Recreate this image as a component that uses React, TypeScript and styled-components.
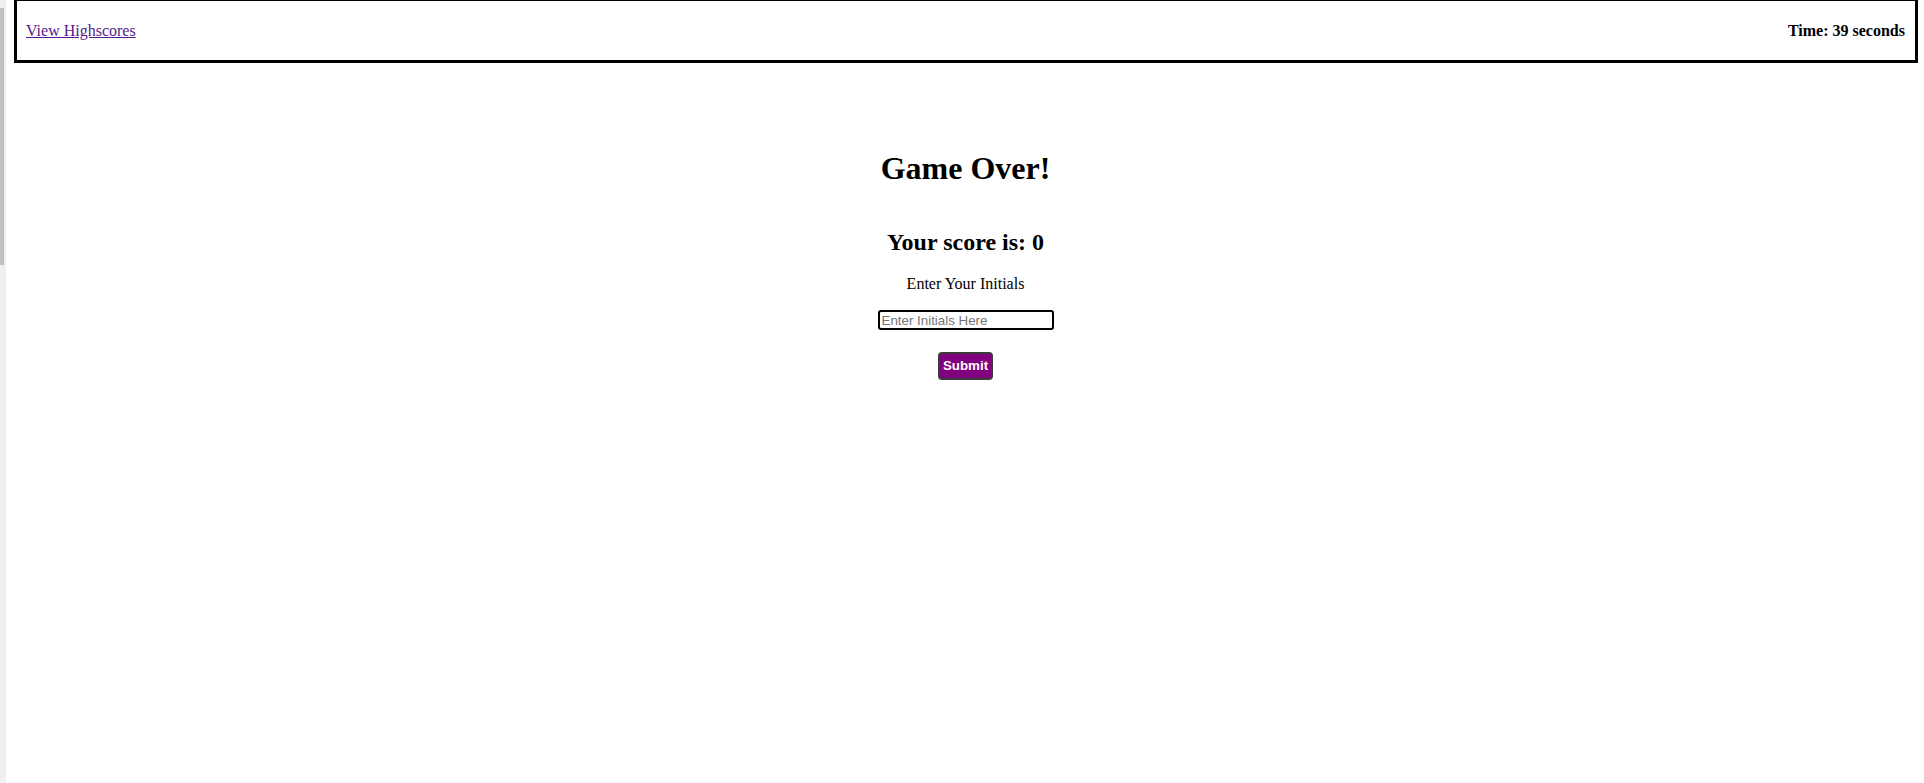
import React from 'react';
import styled, { createGlobalStyle } from "styled-components";

const GlobalStyle = createGlobalStyle`
  html, body {
    margin: 0;
    padding: 0;
    background: #ffffff;
    font-family: "Liberation Serif", "Times New Roman", serif;
    color: #000000;
  }
`;

const Shell = styled.div`
  display: flex;
  min-height: 783px;
  overflow: hidden;
`;

const Track = styled.div`
  width: 6px;
  flex: none;
  background: #f0f0f0;
  padding-top: 8px;
  box-sizing: border-box;
`;

const Thumb = styled.div`
  width: 4px;
  height: 257px;
  background: #c1c1c1;
`;

const Page = styled.div`
  flex: 1;
  display: flex;
  flex-direction: column;
`;

const Header = styled.header`
  margin: -2px 6px 0 8px;
  height: 65px;
  box-sizing: border-box;
  border: 3px solid #000000;
  padding: 0 10px 0 9px;
  display: flex;
  align-items: center;
  justify-content: space-between;
  font-size: 16px;
`;

const HighscoreLink = styled.a`
  color: #551a8b;
  text-decoration: underline;
  margin-top: 1px;
`;

const Timer = styled.span`
  font-weight: bold;
  margin-top: 1px;
`;

const Main = styled.main`
  display: flex;
  flex-direction: column;
  align-items: center;
  padding-top: 87px;
  padding-left: 1px;
`;

const Title = styled.h1`
  margin: 0;
  font-size: 32px;
  font-weight: bold;
`;

const Score = styled.h2`
  margin: 42px 0 0;
  font-size: 24px;
  font-weight: bold;
`;

const Prompt = styled.p`
  margin: 19px 0 0;
  font-size: 16px;
`;

const InitialsInput = styled.input`
  margin-top: 17px;
  width: 176px;
  height: 20px;
  box-sizing: border-box;
  border: 2px solid #000000;
  border-radius: 3px;
  padding: 0 2px;
  font-family: "Liberation Sans", Arial, sans-serif;
  font-size: 13.33px;
  outline: none;

  &::placeholder {
    color: #757575;
  }
`;

const SubmitButton = styled.button`
  margin-top: 22px;
  height: 28px;
  box-sizing: border-box;
  padding: 0 3px;
  border: 2px solid #3b3b3b;
  border-radius: 4px;
  background: #800080;
  color: #ffffff;
  font-family: "Liberation Sans", Arial, sans-serif;
  font-size: 13.33px;
  font-weight: bold;
  line-height: 16px;
  cursor: pointer;
`;

function App() {
  return (
    <Shell>
      <GlobalStyle />
      <Track>
        <Thumb />
      </Track>
      <Page>
        <Header>
          <HighscoreLink href="#">View Highscores</HighscoreLink>
          <Timer>Time: 39 seconds</Timer>
        </Header>
        <Main>
          <Title>Game Over!</Title>
          <Score>Your score is: 0</Score>
          <Prompt>Enter Your Initials</Prompt>
          <InitialsInput type="text" placeholder="Enter Initials Here" />
          <SubmitButton type="button">Submit</SubmitButton>
        </Main>
      </Page>
    </Shell>
  );
}

export default App;
